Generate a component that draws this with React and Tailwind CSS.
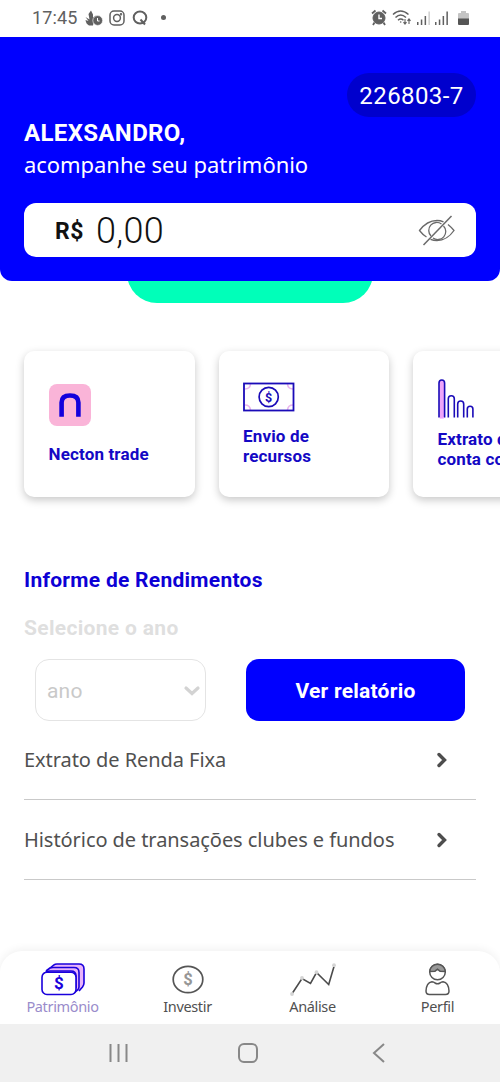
// src/App.jsx
const navItems = [
  { key: "patrimonio", name: "Patrimônio", icon: <MoneyStackIcon /> },
  { key: "investir", name: "Investir", icon: <CoinIcon /> },
  { key: "analise", name: "Análise", icon: <ChartIcon /> },
  { key: "perfil", name: "Perfil", icon: <ProfileIcon /> },
];

const reports = [
  { key: "renda-fixa", name: "Extrato de Renda Fixa" },
  { key: "historico", name: "Histórico de transações clubes e fundos" },
];

function MoneyStackIcon() {
  return (
    <svg width="44" height="33" viewBox="0 0 44 33" fill="none" stroke="#1a00dc" strokeWidth="1.6" strokeLinejoin="round">
      <path d="M9 5l4-3.2Q14 1 16 1h22q5 0 5 5v14q0 2-1.500 4l-3.500 4" fill="#e9b4fa" />
      <path d="M5 8l4-3Q10 4.500 12 4.500h21q5 0 5 5V24q0 2-2 3.500L33 30" fill="#e9b4fa" />
      <path d="M2.500 11L6 8.500Q7 8 9 8h21q5 0 5 5v12" />
      <rect x="1" y="9.200" width="34" height="22.300" rx="5" fill="#fff" />
      <text x="18" y="26" textAnchor="middle" fontFamily="Roboto, sans-serif" fontWeight="700" fontSize="17" fill="#1a00dc" stroke="none">$</text>
    </svg>
  );
}

function CoinIcon() {
  return (
    <svg width="32" height="33" viewBox="0 0 32 33" fill="none">
      <ellipse cx="16" cy="16.500" rx="14.800" ry="13.200" stroke="#555" strokeWidth="1.700" />
      <text x="16" y="22" textAnchor="middle" fontFamily="Roboto, sans-serif" fontWeight="700" fontSize="16.500" fill="#969696">$</text>
    </svg>
  );
}

function ChartIcon() {
  return (
    <svg width="46" height="33" viewBox="0 0 46 33" fill="none">
      <path d="M2.500 30L12 15.500l8.500 5L26.500 9.500l12.200 12L44 3.500" stroke="#4b4b4b" strokeWidth="1.600" />
      <g fill="#d4d4d4">
        <circle cx="2" cy="31" r="1.900" />
        <circle cx="12" cy="15" r="1.900" />
        <circle cx="26.500" cy="9.200" r="1.900" />
        <circle cx="44" cy="2.200" r="1.900" />
      </g>
    </svg>
  );
}

function ProfileIcon() {
  return (
    <svg width="26" height="33" viewBox="0 0 26 33" fill="none" stroke="#555" strokeWidth="1.500">
      <circle cx="12.500" cy="9" r="7.800" />
      <path d="M4.800 8.500C5 4 8.500 1.300 12.500 1.300S20 4 20.200 8.500l-5.200-.3-2.500-2L10 8.200z" fill="#999" />
      <path d="M7 18.700q1.800 0 3 1.300 2.500 1.500 5 0 1.200-1.300 3-1.300c3.500.6 5.800 3.800 6 9.300q0 3.500-3.500 3.500h-16Q1 31.500 1 28c.2-5.500 2.500-8.700 6-9.300z" />
    </svg>
  );
}

function NectonIcon() {
  return (
    <div className="flex h-[42px] w-[42px] items-center justify-center rounded-[8px] bg-[#fab4d8]">
      <svg width="22" height="24" viewBox="0 0 22 24" fill="none" stroke="#1200dc" strokeWidth="4.600">
        <path d="M2.600 23.800V9.500Q2.600 2.500 11 2.500T19.400 9.500v14.300" />
      </svg>
    </div>
  );
}

function BankNoteIcon() {
  return (
    <svg width="52" height="30" viewBox="0 0 52 30" fill="none">
      <path d="M2 7q5 0 5.500-5M44.500 2q.5 5 5.500 5M2 23q5 0 5.500 5M44.500 28q.5-5 5.500-5" stroke="#eab6ee" strokeWidth="1.600" />
      <rect x="1" y="1.500" width="49.500" height="27" stroke="#1a0bb8" strokeWidth="1.800" />
      <circle cx="25.700" cy="15" r="9.600" stroke="#1a0bb8" strokeWidth="1.700" />
      <text x="25.700" y="19.500" textAnchor="middle" fontFamily="Roboto, sans-serif" fontWeight="700" fontSize="12.500" fill="#1a0bb8">$</text>
    </svg>
  );
}

function BarsIcon() {
  return (
    <svg width="38" height="40" viewBox="0 0 38 40" fill="none" stroke="#1a0bb8" strokeWidth="1.600">
      <path d="M1 38.500V4Q1 1 3.800 1t2.800 3v34.500" fill="#efa5fa" />
      <path d="M1.800 38.800h4" stroke="#efa5fa" />
      <path d="M10.300 38.500V19.800q0-3 3-3t3 3v18.700M19.700 38.500V25q0-3 3-3t3 3v13.500M29.300 38.500V30q0-2.800 2.800-2.800t2.800 2.800v8.500" />
    </svg>
  );
}

function EyeOffIcon() {
  return (
    <svg width="38" height="31" viewBox="0 0 38 31" fill="none" stroke="#6a6a6a" strokeWidth="1.300">
      <path d="M8.500 22Q4.500 19.500 1.500 15.500Q9 5.500 19 5.500q3.500 0 6.500 1.300M30 9.500q3 2.400 6 6Q29 25.500 19 25.500q-3.500 0-6.500-1.200" />
      <path d="M13 21a8 8 0 0 1 10.500-12M25.500 11a8 8 0 0 1-10.500 12" />
      <path d="M33.500 1L5.500 30" strokeWidth="1.500" />
    </svg>
  );
}

function SignalIcon({ className, weak }) {
  return (
    <svg className={className} width="14" height="16" viewBox="0 0 14 16" fill="#606060">
      <rect x="0" y="12" width="1.500" height="3" />
      <rect x="3.800" y="9.500" width="1.500" height="5.500" />
      <rect x="7.600" y="6" width="1.500" height="9" />
      <rect x="11.400" y="1.500" width="1.500" height="13.500" fill={weak ? "#cfcfcf" : "#606060"} />
    </svg>
  );
}

function StatusBar() {
  return (
    <div className="flex h-[37px] shrink-0 items-center justify-between pr-[31px] pb-[2px] pl-[32px] text-[#606060]">
      <div className="flex items-center">
        <span className="w-[53px] text-[18px] tracking-[0.150px]">17:45</span>
        <svg width="18" height="16" viewBox="0 0 18 16" fill="#606060">
          <path d="M.5 7l4 2.500L3.500 4 6 .5l2 4v3l3-2-2 5-1 5H4Q1 14 .5 10l3 1z" />
          <circle cx="12.700" cy="10.500" r="4.900" stroke="#fff" strokeWidth=".6" />
          <path d="M12.500 8v3h2" fill="none" stroke="#fff" />
        </svg>
        <svg className="ml-[6px]" width="16" height="16" viewBox="0 0 16 16" fill="none" stroke="#606060" strokeWidth="1.500">
          <rect x="1" y="1" width="14" height="14" rx="4" />
          <circle cx="8" cy="8" r="3.400" />
          <circle cx="12" cy="4.200" r=".5" />
        </svg>
        <svg className="ml-[7px]" width="16" height="16" viewBox="0 0 16 16" fill="none" stroke="#606060" strokeWidth="2">
          <ellipse cx="8" cy="7.500" rx="6.300" ry="6" />
          <path d="M8.500 9.500l4.500 5" />
        </svg>
        <span className="ml-[13px] h-[5px] w-[5px] rounded-full bg-[#606060]" />
      </div>
      <div className="flex items-center">
        <svg width="16" height="17" viewBox="0 0 16 17" fill="none" stroke="#606060">
          <circle cx="8" cy="9" r="6" fill="#606060" />
          <path d="M1 4.500L4.500 1.500M11.500 1.500L15 4.500M3.500 13.500L2 16M12.500 13.500L14 16" strokeWidth="1.800" />
          <path d="M8 5.500v4h3" stroke="#fff" strokeWidth="1.400" />
        </svg>
        <svg className="ml-[5px]" width="20" height="17" viewBox="0 0 20 17" fill="none" stroke="#606060" strokeWidth="1.500">
          <path d="M1 5.500q7.500-7 15.500 0M3.500 8.500q5.200-5 10.500 0M6 11.300q2.700-2.500 5.500 0" />
          <circle cx="8.700" cy="13" r=".8" fill="#606060" stroke="none" />
          <path d="M13 10v5M11.500 13.200l1.500 2 1.500-2M17 15v-5M15.500 11.800l1.500-2 1.500 2" strokeWidth="1.100" />
        </svg>
        <SignalIcon className="ml-[5px]" weak />
        <SignalIcon className="ml-[4px]" />
        <svg className="ml-[9px]" width="11" height="16" viewBox="0 0 11 16">
          <path d="M3 1h5v2h2q1 0 1 1v5H0V4q0-1 1-1h2z" fill="#c4c4c4" />
          <path d="M0 8.500h11V14q0 1-1 1H1q-1 0-1-1z" fill="#555" />
        </svg>
      </div>
    </div>
  );
}

function Card({ icon, children, className }) {
  return (
    <div className={`h-[146px] w-[170.500px] shrink-0 rounded-[10px] bg-white pl-[24.500px] text-[17px] leading-[20px] font-bold tracking-[0.150px] text-[#1408c4] shadow-[0_3px_8px_rgba(0,0,0,0.22)] ${className}`}>
      {icon}
      {children}
    </div>
  );
}

function Chevron() {
  return (
    <svg width="12" height="18" viewBox="0 0 12 18" fill="none" stroke="#4d4d4d" strokeWidth="3.400" strokeLinecap="round">
      <path d="M3 3.500l5.500 5.500L3 14.500" />
    </svg>
  );
}

export default function App() {
  return (
    <div className="flex h-[1082px] w-[500px] flex-col overflow-hidden bg-white font-['Roboto',sans-serif]">
      <StatusBar />

      <header className="flex h-[244px] shrink-0 flex-col rounded-b-[12px] bg-[#0000ff] px-[24px] pt-[36px] text-white">
        <div className="flex h-[44px] w-[129px] items-center justify-center self-end rounded-full bg-[#0000cd] pt-[2px] text-[24px] font-normal tracking-[0.400px]">
          226803-7
        </div>
        <h1 className="mt-[1px] text-[24px] leading-[31px] font-bold tracking-[0.350px]">ALEXSANDRO,</h1>
        <p className="font-['Noto_Sans',sans-serif] text-[22px] leading-[31px] tracking-[-0.050px]">acompanhe seu patrimônio</p>
        <div className="mt-[23px] flex h-[54px] items-center rounded-[12px] bg-white pr-[20px] pl-[31px]">
          <span className="w-[41px] pt-[4px] text-[23px] font-bold tracking-[0.500px] text-[#111]">R$</span>
          <span className="flex-1 pt-[2px] text-[36px] font-light tracking-[0.300px] text-[#111]">0,00</span>
          <EyeOffIcon />
        </div>
      </header>

      {/* bottom edge of the pill that slides out from under the header */}
      <div className="flex h-[22px] shrink-0 items-end justify-center overflow-hidden">
        <div className="h-[60px] w-[246px] shrink-0 rounded-[30px] bg-[#00ffb9]" />
      </div>

      <section className="flex shrink-0 gap-[24px] pt-[48px] pl-[24px]">
        <Card className="pt-[33px]" icon={<NectonIcon />}>
          <p className="mt-[18px]">Necton trade</p>
        </Card>
        <Card className="pt-[31px]" icon={<BankNoteIcon />}>
          <p className="mt-[14px]">Envio de<br />recursos</p>
        </Card>
        <Card className="pt-[28px]" icon={<BarsIcon />}>
          <p className="mt-[10px]">Extrato da<br />conta corrente</p>
        </Card>
      </section>

      <section className="mt-[70px] flex shrink-0 flex-col px-[24px]">
        <h2 className="text-[21px] leading-[26px] font-bold tracking-[0.270px] text-[#0d00d5]">Informe de Rendimentos</h2>
        <p className="mt-[22px] text-[21px] leading-[26px] font-bold tracking-[0.320px] text-[#dfdfdf]">Selecione o ano</p>
        <div className="mt-[18px] flex gap-[40px] pl-[11px]">
          <div className="flex h-[62px] w-[171px] items-center justify-between rounded-[14px] border-[1.500px] border-[#e4e4e4] pr-[4px] pl-[11px] text-[21px] text-[#c9c9c9]">
            <span className="pt-[3px] tracking-[0.200px]">ano</span>
            <svg className="mt-[2px]" width="18" height="12" viewBox="0 0 18 12" fill="none" stroke="#d3d3d3" strokeWidth="3.200" strokeLinecap="round">
              <path d="M3 3l6 5.500L15 3" />
            </svg>
          </div>
          <button className="h-[62px] w-[219px] rounded-[13px] bg-[#0000ff] pt-[3px] text-[21px] font-bold tracking-[0.250px] text-white">Ver relatório</button>
        </div>
        <div className="-mt-[1px]">
          {reports.map((report) => (
            <div key={report.key} className="flex h-[80px] items-center justify-between border-b-[1.500px] border-[#c9c9c9] pr-[28px] text-[#505050]">
              <span className="font-['Noto_Sans',sans-serif] text-[20px] tracking-[-0.060px]">{report.name}</span>
              <Chevron />
            </div>
          ))}
        </div>
      </section>

      <nav className="mt-auto grid h-[73px] shrink-0 grid-cols-4 rounded-t-[22px] bg-white pt-[12px] shadow-[0_-2px_8px_rgba(0,0,0,0.06)]">
        {navItems.map((item) => (
          <div key={item.key} className="flex flex-col items-center">
            {item.icon}
            <span className={`font-['Noto_Sans',sans-serif] text-[14.500px] leading-[20px] tracking-[-0.350px] ${item.key === "patrimonio" ? "text-[#9a8ccb]" : "text-[#505050]"}`}>
              {item.name}
            </span>
          </div>
        ))}
      </nav>

      <footer className="flex h-[58px] shrink-0 items-center bg-[#f0f0f0]">
        <svg className="ml-[109px]" width="19" height="20" viewBox="0 0 19 20" stroke="#888" strokeWidth="2">
          <path d="M1.500 1v18M9.500 1v18M17.500 1v18" />
        </svg>
        <svg className="ml-[110px]" width="20" height="20" viewBox="0 0 20 20" fill="none" stroke="#888" strokeWidth="2">
          <rect x="1" y="1" width="18" height="18" rx="5" />
        </svg>
        <svg className="ml-[114px]" width="14" height="20" viewBox="0 0 14 20" fill="none" stroke="#888" strokeWidth="2">
          <path d="M12 1L2 10l10 9" />
        </svg>
      </footer>
    </div>
  );
}
